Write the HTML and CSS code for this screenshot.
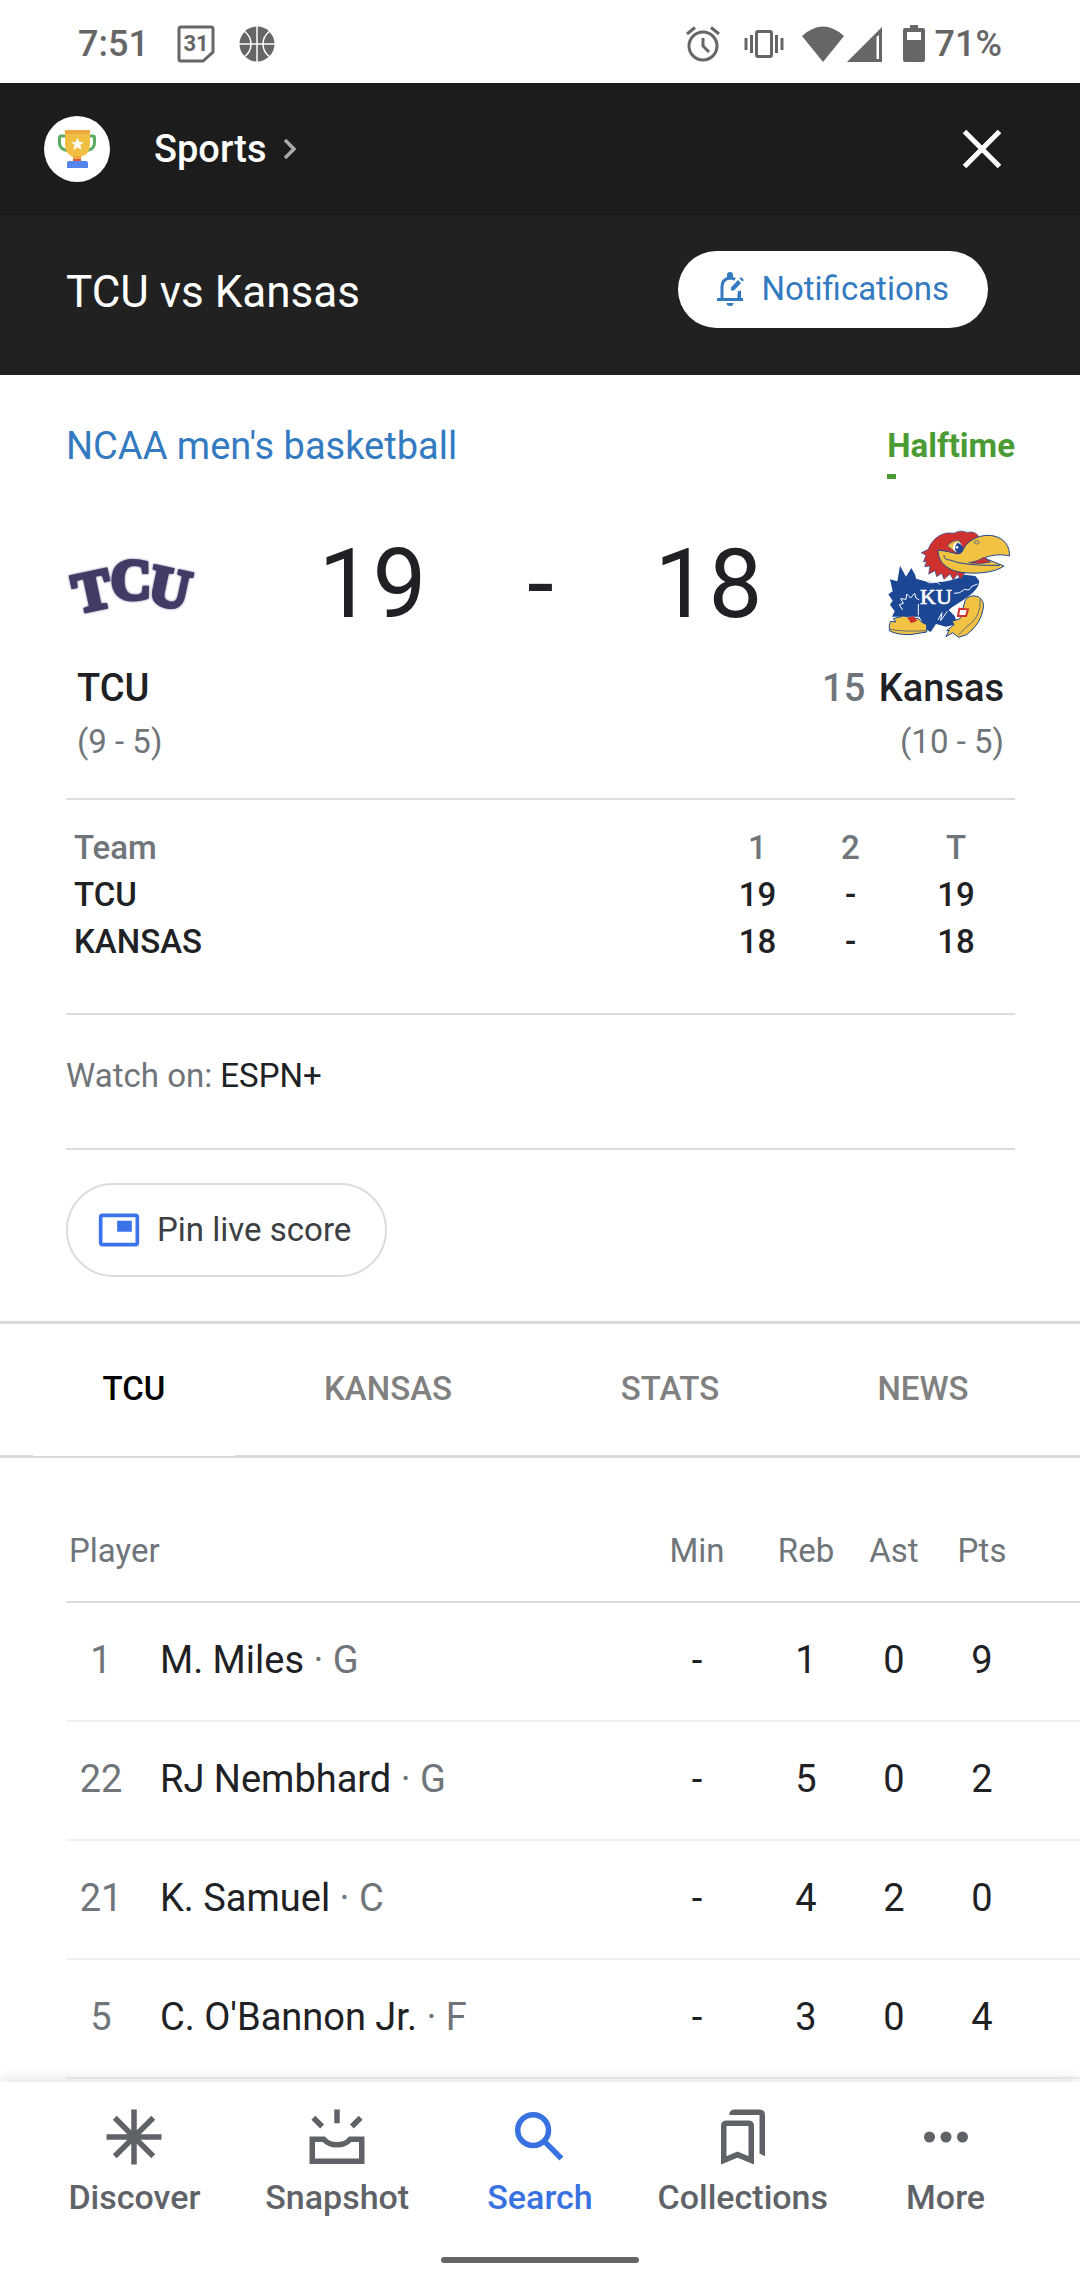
FILE: index.html
```html
<!DOCTYPE html>
<html lang="en">
<head>
  <meta charset="UTF-8">
  <meta name="viewport" content="width=device-width, initial-scale=1.0">
  <title>TCU vs Kansas</title>
  <link rel="stylesheet" href="styles.css">
</head>
<body>

  <!-- Status bar -->
  <div class="status-bar">
    <span class="status-time">7:51</span>
    <svg class="icon-calendar" width="38" height="40" viewBox="0 0 38 40">
      <path d="M4 3H34Q36 3 36 5V28L26 37H4Q2 37 2 35V5Q2 3 4 3Z" fill="none" stroke="#666" stroke-width="3"/>
      <text x="19" y="27" text-anchor="middle" class="calendar-day">31</text>
    </svg>
    <svg class="icon-ball" width="36" height="36" viewBox="0 0 36 36">
      <circle cx="18" cy="18" r="17.5" fill="#666"/>
      <path d="M18 0V36M0 18H36M5 5Q12 10 12 18T5 31M31 5Q24 10 24 18T31 31" fill="none" stroke="#fff" stroke-width="1.5"/>
    </svg>
    <div class="status-right">
      <svg width="36" height="36" viewBox="0 0 36 36" fill="none" stroke="#666" stroke-width="3">
        <circle cx="18" cy="20" r="14"/>
        <path d="M18 12V20L24 26M2 8L10 1.5M34 8L26 1.5"/>
      </svg>
      <svg class="icon-vibrate" width="40" height="30" viewBox="0 0 40 30">
        <rect x="12.5" y="2.5" width="15" height="25" rx="1.5" fill="none" stroke="#666" stroke-width="3"/>
        <path d="M2 9V21M7.5 6V24M38 9V21M32.5 6V24" stroke="#666" stroke-width="3"/>
      </svg>
      <svg class="icon-wifi" width="42" height="36" viewBox="0 0 42 36">
        <path d="M0 10Q21 -9 42 10L21 36Z" fill="#666"/>
      </svg>
      <svg width="36" height="36" viewBox="0 0 36 36">
        <path d="M0 36L35 1V36ZM29.500 11V33H32V9Z" fill="#666" fill-rule="evenodd"/>
      </svg>
      <svg class="icon-battery" width="22" height="37" viewBox="0 0 22 37">
        <path d="M7 0H15V3H20Q22 3 22 5V35Q22 37 20 37H2Q0 37 0 35V5Q0 3 2 3H7ZM4 7V15H18V7Z" fill="#666" fill-rule="evenodd"/>
      </svg>
      <span>71%</span>
    </div>
  </div>

  <!-- Dark header -->
  <header>
    <div class="brand-bar">
      <span class="brand-logo">
        <svg width="38" height="38" viewBox="0 0 38 38">
          <path d="M8 6H3Q1.500 6 1.500 8V13Q1.500 19 9 20.500M30 6H35Q36.500 6 36.500 8V13Q36.500 19 29 20.500" fill="none" stroke="#5bab62" stroke-width="3"/>
          <path d="M7 0H32V14Q32 25 22 27V31H15V27Q7 24 7 14Z" fill="#f2bf42"/>
          <path d="M7 0H32V4H7Z" fill="#eda83f"/>
          <path d="M15 26H23V30H15Z" fill="#eda83f"/>
          <path d="M15 29H23V31H15Z" fill="#e2553d"/>
          <path d="M11 31H28Q30 31 30 33V38H9V33Q9 31 11 31Z" fill="#5585ec"/>
          <path d="M19.500 7.500L21.300 12H26L22.300 15L23.600 20L19.500 17.200L15.400 20L16.700 15L13 12H17.700Z" fill="#fff"/>
        </svg>
      </span>
      <a href="#" class="brand-link">Sports
        <svg width="14" height="22" viewBox="0 0 14 22"><path d="M2 2L11 11L2 20" fill="none" stroke="#aaa" stroke-width="3.500"/></svg>
      </a>
      <button type="button" class="close-btn" aria-label="Close">
        <svg width="40" height="40" viewBox="0 0 40 40"><path d="M2.500 2.500L37.500 37.500M37.500 2.500L2.500 37.500" stroke="#fff" stroke-width="5"/></svg>
      </button>
    </div>
    <div class="title-bar">
      <h1>TCU vs Kansas</h1>
      <button type="button" class="notify-btn">
        <svg width="28" height="34" viewBox="0 0 28 34">
          <path d="M0 27.500H26M5 27V15Q5 7 13 6Q16 6 18 7.500M22.300 27V19" fill="none" stroke="#337ac0" stroke-width="3"/>
          <path d="M10 6V3Q10 0 13 0T16 3V6ZM9.500 31H16.500Q16.500 34 13 34T9.500 31ZM14 15.500L21 8L24 11L17 18.500H14ZM22.500 6.500L24 5L27 8L25.500 9.500Z" fill="#337ac0"/>
          <path d="M20.500 22L24 18V27H20.500Z" fill="#337ac0"/>
        </svg>
        Notifications
      </button>
    </div>
  </header>

  <main>
    <!-- Score summary -->
    <section class="summary">
      <div class="league-row">
        <a href="#">NCAA men's basketball</a>
        <div class="game-status">Halftime</div>
      </div>

      <div class="score-row">
        <svg class="team-logo" viewBox="0 0 130 130" role="img" aria-label="TCU logo">
          <g class="tcu-letters">
            <text x="30" y="90" transform="rotate(-12 30 90)">T</text>
            <text x="65" y="80">C</text>
            <text x="100" y="87" transform="rotate(12 100 87)">U</text>
          </g>
        </svg>
        <div class="score">
          <span>19</span>
          <span class="score-dash">-</span>
          <span>18</span>
        </div>
        <svg class="team-logo" viewBox="45 27 390 390" role="img" aria-label="Kansas logo">
          <!-- body -->
          <path d="M55 253L68 244L60 208L82 214L90 167L108 200L124 174L136 196L138 206L160 212C200 222 250 214 284 194L316 198L328 213C326 240 300 258 246 292L236 300L254 318L262 342L228 350L198 342L182 366L168 358L148 320L66 320L74 304L60 284L68 272Z" fill="#1c4795"/>
          <path d="M164 210Q176 222 190 218T210 224M252 250Q270 252 284 238Q300 244 304 230L322 222M98 300L88 284L100 280L92 266L108 268L110 252L122 264L134 250L138 264L148 270M145 282V316M204 330L216 308L212 332L232 304" fill="none" stroke="#fff" stroke-width="3"/>
          <!-- head -->
          <path d="M154 128L175 118C182 96 202 74 230 69C245 68 255 72 260 66C275 60 288 66 292 68C306 62 322 70 326 80L284 190L272 208L262 193L250 210L240 192L222 208L215 190L200 200L195 182L176 192L180 168L164 170L170 154L160 156L168 136Z" fill="#cf312e" stroke="#1c4795" stroke-width="2"/>
          <path d="M232 108Q244 92 268 90L276 116L256 126Z" fill="#f2c242" stroke="#1c4795" stroke-width="2"/>
          <ellipse cx="263" cy="112" rx="14" ry="15" fill="#fff"/>
          <path d="M262 98Q278 102 280 118Q278 130 264 130Q252 122 256 108Z" fill="#1c4795"/>
          <circle cx="261" cy="112" r="4" fill="#fff"/>
          <!-- beak -->
          <path d="M204 120Q236 124 264 132Q276 132 282 114C296 88 336 70 372 78C406 86 420 112 418 138C396 132 370 134 346 142L352 148L402 168C374 188 324 192 282 188C236 184 204 160 204 120Z" fill="#f2c242" stroke="#1c4795" stroke-width="3"/>
          <path d="M296 158Q324 154 342 142L362 156Q330 164 296 158Z" fill="#cf312e" stroke="#1c4795" stroke-width="2"/>
          <path d="M222 136Q222 150 240 150Q280 168 390 166" fill="none" stroke="#1c4795" stroke-width="3"/>
          <ellipse cx="320" cy="97" rx="7" ry="5" fill="none" stroke="#1c4795" stroke-width="2"/>
          <!-- shoes -->
          <path d="M58 346L62 334L78 336L70 326L100 318L146 326L154 336L170 344V366L120 374Q78 374 58 362Z" fill="#f2c242" stroke="#1c4795" stroke-width="3"/>
          <path d="M60 358Q100 366 168 362" fill="none" stroke="#1c4795" stroke-width="2"/>
          <path d="M112 324L130 318L142 332L124 340Z" fill="#cf312e"/>
          <path d="M286 270Q300 252 324 260Q344 272 340 294Q334 340 290 374L266 382L248 368L228 380L238 360L230 362L252 344L246 334L270 326Z" fill="#f2c242" stroke="#1c4795" stroke-width="3"/>
          <path d="M330 268Q336 320 288 352L264 376" fill="none" stroke="#1c4795" stroke-width="2"/>
          <path d="M268 296L294 298L288 318L264 318Z" fill="#fff" stroke="#cf312e" stroke-width="6"/>
          <text x="198" y="283" text-anchor="middle" class="ku-text">KU</text>
        </svg>
      </div>

      <div class="teams-row">
        <div>
          <div class="team-name">TCU</div>
          <div class="team-record">(9 - 5)</div>
        </div>
        <div class="team-away">
          <div class="team-name"><span class="team-rank">15</span> Kansas</div>
          <div class="team-record">(10 - 5)</div>
        </div>
      </div>

      <div class="linescore-box">
        <table class="linescore">
          <thead>
            <tr><th>Team</th><th>1</th><th>2</th><th>T</th></tr>
          </thead>
          <tbody>
            <tr><td>TCU</td><td>19</td><td>-</td><td>19</td></tr>
            <tr><td>KANSAS</td><td>18</td><td>-</td><td>18</td></tr>
          </tbody>
        </table>
      </div>

      <p class="watch">Watch on: <span>ESPN+</span></p>

      <div class="pin-box">
        <button type="button" class="pin-btn">
          <svg width="44" height="44" viewBox="0 0 24 24">
            <path d="M3 3H21Q23 3 23 5V19Q23 21 21 21H3Q1 21 1 19V5Q1 3 3 3ZM3 5V19H21V5ZM11 7H19V13H11Z" fill="#3a74e8" fill-rule="evenodd"/>
          </svg>
          Pin live score
        </button>
      </div>
    </section>

    <!-- Tabs -->
    <nav class="tabs">
      <a href="#" class="active">TCU</a>
      <a href="#">KANSAS</a>
      <a href="#">STATS</a>
      <a href="#">NEWS</a>
    </nav>

    <!-- Players -->
    <section class="players-box">
      <table class="players">
        <thead>
          <tr>
            <th colspan="2" class="player-head">Player</th>
            <th class="min">Min</th>
            <th class="stat">Reb</th>
            <th class="stat">Ast</th>
            <th class="stat">Pts</th>
            <th class="spacer"></th>
          </tr>
        </thead>
        <tbody>
          <tr><td class="number">1</td><td class="name">M. Miles <span>· G</span></td><td>-</td><td>1</td><td>0</td><td>9</td><td></td></tr>
          <tr><td class="number">22</td><td class="name">RJ Nembhard <span>· G</span></td><td>-</td><td>5</td><td>0</td><td>2</td><td></td></tr>
          <tr><td class="number">21</td><td class="name">K. Samuel <span>· C</span></td><td>-</td><td>4</td><td>2</td><td>0</td><td></td></tr>
          <tr><td class="number">5</td><td class="name">C. O'Bannon Jr. <span>· F</span></td><td>-</td><td>3</td><td>0</td><td>4</td><td></td></tr>
        </tbody>
      </table>
    </section>
  </main>

  <!-- Bottom navigation -->
  <footer class="bottom-nav">
    <nav class="nav-items">
      <a href="#">
        <svg width="66" height="66" viewBox="0 0 24 24"><path d="M12 2V22M2 12H22M5 5L19 19M19 5L5 19"/></svg>
        Discover
      </a>
      <a href="#">
        <svg width="66" height="66" viewBox="0 0 24 24"><path d="M3 12.800H7.200C9.500 15.500 14.500 15.500 16.800 12.800H21V20.800H3ZM12 2V7M3.400 5L6.600 8.200M20.600 5L17.400 8.200"/></svg>
        Snapshot
      </a>
      <a href="#" class="active">
        <svg width="66" height="66" viewBox="0 0 24 24"><circle cx="9.500" cy="9.500" r="5.600"/><path d="M13.500 13.500L19.800 19.800"/></svg>
        Search
      </a>
      <a href="#">
        <svg width="66" height="66" viewBox="0 0 24 24">
          <path d="M5 20.500V8Q5 7 6 7H14Q15 7 15 8V20.500L10 18.400Z"/>
          <path class="solid" d="M9 2H18Q20 2 20 4V19L18 18V4H7Q7 2 9 2Z"/>
        </svg>
        Collections
      </a>
      <a href="#">
        <svg width="66" height="66" viewBox="0 0 24 24" class="dots"><circle cx="6" cy="12" r="2"/><circle cx="12" cy="12" r="2"/><circle cx="18" cy="12" r="2"/></svg>
        More
      </a>
    </nav>
    <div class="home-bar"></div>
  </footer>

</body>
</html>
```
FILE: styles.css
```css
/* General */
* {
  box-sizing: border-box;
}

body {
  margin: 0;
  min-height: 100vh;
  display: flex;
  flex-direction: column;
  font-family: Roboto, "Liberation Sans", sans-serif;
  font-size: 33px;
  line-height: 48px;
  color: #202124;
  background-color: #fff;
}

a {
  color: inherit;
  text-decoration: none;
}

button {
  font: inherit;
  border: none;
  padding: 0;
  cursor: pointer;
}

svg {
  display: block;
  flex: none;
}

table {
  width: 100%;
  border-spacing: 0;
}

th,
td {
  padding: 0;
  text-align: center;
}

main {
  flex: 1;
}

/* Status bar */
.status-bar {
  display: flex;
  align-items: center;
  height: 83px;
  padding: 4px 78px 0;
  font-size: 36px;
  font-weight: 500;
  color: #666;
}

.icon-calendar {
  margin: 0 24px 0 28px;
}

.calendar-day {
  font-size: 22px;
  font-weight: 700;
  fill: #666;
}

.status-right {
  display: flex;
  align-items: center;
  margin-left: auto;
}

.icon-vibrate {
  margin: 0 18px 0 23px;
}

.icon-wifi {
  margin-right: 3px;
}

.icon-battery {
  margin: 0 10px 0 20px;
}

/* Dark header */
header {
  color: #fff;
  background-color: #212121;
}

.brand-bar {
  display: flex;
  align-items: center;
  height: 132px;
  padding: 0 78px 0 44px;
  background-color: #1c1c1c;
}

.brand-logo {
  display: flex;
  align-items: center;
  justify-content: center;
  width: 66px;
  height: 66px;
  border-radius: 50%;
  background-color: #fff;
}

.brand-link {
  display: flex;
  align-items: center;
  gap: 16px;
  margin-left: 44px;
  font-size: 38px;
  font-weight: 500;
}

.close-btn {
  margin-left: auto;
  background: none;
}

.title-bar {
  display: flex;
  align-items: center;
  justify-content: space-between;
  height: 160px;
  padding: 0 92px 12px 66px;
}

h1 {
  margin: 6px 0 0;
  font-size: 44px;
  font-weight: 400;
}

.notify-btn {
  display: flex;
  align-items: center;
  gap: 16px;
  height: 77px;
  padding: 0 39px;
  border-radius: 39px;
  color: #337ac0;
  background-color: #fff;
}

/* Score summary */
.summary {
  padding: 47px 65px 44px 66px;
}

.league-row {
  display: flex;
  justify-content: space-between;
  font-size: 38px;
  color: #337ac0;
}

.game-status {
  font-size: 33px;
  font-weight: 700;
  color: #4b9b34;
}

.game-status::after {
  content: "";
  display: block;
  width: 9px;
  height: 5px;
  margin-top: 4px;
  background-color: #4b9b34;
}

.score-row {
  display: flex;
  align-items: center;
  justify-content: space-between;
  margin-top: 40px;
}

.team-logo {
  width: 130px;
  height: 130px;
  overflow: visible;
}

.tcu-letters {
  font-family: "Liberation Serif", serif;
  font-size: 56px;
  font-weight: 700;
  text-anchor: middle;
  fill: #433b66;
  stroke: #433b66;
  stroke-width: 4px;
  filter: drop-shadow(0 0 1px #6f6890);
}

.ku-text {
  font-family: "Liberation Serif", serif;
  font-size: 66px;
  font-weight: 400;
  fill: #fff;
  stroke: #fff;
  stroke-width: 2px;
}

.score {
  display: grid;
  grid-template-columns: repeat(3, 168px);
  font-size: 96px;
  line-height: 112px;
  text-align: center;
}

.teams-row {
  display: flex;
  justify-content: space-between;
  margin-top: 12px;
  padding: 0 11px;
  line-height: 54px;
}

.team-away {
  text-align: right;
}

.team-name {
  font-size: 38px;
  font-weight: 500;
}

.team-rank,
.team-record {
  color: #70757a;
}

.team-rank {
  margin-right: 4px;
}

.linescore-box {
  margin-top: 29px;
  padding: 24px 0 48px;
  border-top: 2px solid #dadce0;
  border-bottom: 2px solid #dadce0;
}

.linescore {
  font-weight: 500;
  line-height: 47px;
}

.linescore th {
  width: 93px;
  font-weight: 500;
  color: #70757a;
}

.linescore th:last-child {
  width: 118px;
}

.linescore th:first-child,
.linescore td:first-child {
  width: auto;
  padding-left: 8px;
  text-align: left;
}

.watch {
  margin: 0;
  padding: 37px 0 48px;
  border-bottom: 2px solid #dadce0;
  color: #70757a;
}

.watch span {
  color: #202124;
}

.pin-box {
  padding-top: 33px;
}

.pin-btn {
  display: flex;
  align-items: center;
  gap: 16px;
  height: 94px;
  padding: 0 34px 0 29px;
  border: 2px solid #dadce0;
  border-radius: 47px;
  color: #3c4043;
  background-color: #fff;
}

/* Tabs */
.tabs {
  display: grid;
  grid-template-columns: 202fr 306fr 258fr 248fr;
  padding: 0 33px;
  border-top: 3px solid #dadada;
  border-bottom: 3px solid #dadada;
  font-weight: 500;
  text-align: center;
}

.tabs a {
  padding: 41px 0 42px;
  color: #808080;
}

.tabs .active {
  margin-bottom: -1px;
  color: #000;
  background-color: #fff;
}

/* Players */
.players-box {
  padding: 0 0 3px 66px;
}

.players th {
  padding: 69px 0 26px;
  border-bottom: 2px solid #dadce0;
  font-weight: 400;
  color: #70757a;
}

.players .player-head {
  padding-left: 3px;
  text-align: left;
}

.players td {
  height: 119px;
  padding-bottom: 4px;
  border-bottom: 2px solid #f1f1f1;
  font-size: 38px;
}

.players .number {
  width: 70px;
  color: #70757a;
}

.players .name {
  padding-left: 24px;
  text-align: left;
}

.name span {
  color: #70757a;
}

.players .min {
  width: 130px;
}

.players .stat {
  width: 88px;
}

.players .spacer {
  width: 54px;
}

/* Bottom navigation */
.bottom-nav {
  position: sticky;
  bottom: 0;
  height: 198px;
  padding: 22px 33px 0;
  background-color: #fff;
  box-shadow: 0 0 16px rgba(0, 0, 0, 0.16);
}

.nav-items {
  display: grid;
  grid-template-columns: repeat(5, 1fr);
  font-size: 34px;
  font-weight: 500;
  color: #5f6368;
}

.nav-items a {
  display: flex;
  flex-direction: column;
  align-items: center;
  gap: 3px;
}

.nav-items svg {
  fill: none;
  stroke: currentColor;
  stroke-width: 2;
}

.nav-items .solid,
.nav-items .dots {
  fill: currentColor;
  stroke: none;
}

.nav-items .active {
  color: #3871e0;
}

.home-bar {
  width: 198px;
  height: 6px;
  margin: 36px auto 0;
  border-radius: 3px;
  background-color: #666;
}
```
